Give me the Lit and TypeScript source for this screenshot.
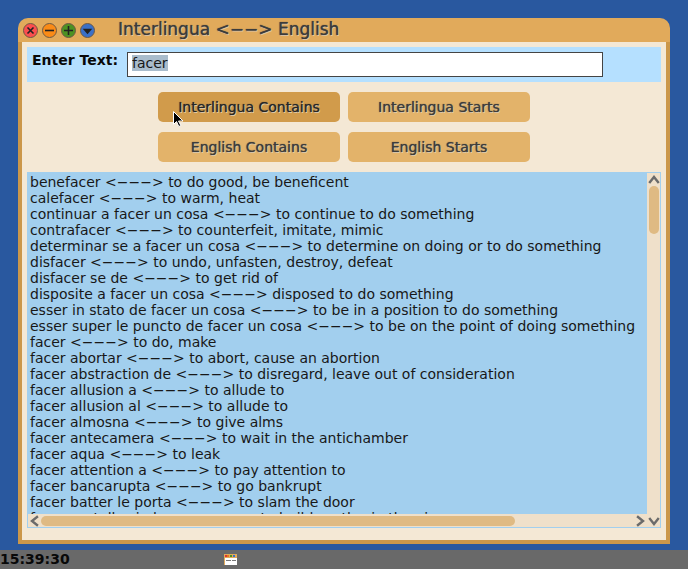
import { LitElement, html, css, svg } from "lit";
import { customElement, state } from "lit/decorators.js";

const ENTRIES: [string, string][] = [
  ["benefacer", "to do good, be beneficent"],
  ["calefacer", "to warm, heat"],
  ["continuar a facer un cosa", "to continue to do something"],
  ["contrafacer", "to counterfeit, imitate, mimic"],
  ["determinar se a facer un cosa", "to determine on doing or to do something"],
  ["disfacer", "to undo, unfasten, destroy, defeat"],
  ["disfacer se de", "to get rid of"],
  ["disposite a facer un cosa", "disposed to do something"],
  ["esser in stato de facer un cosa", "to be in a position to do something"],
  ["esser super le puncto de facer un cosa", "to be on the point of doing something"],
  ["facer", "to do, make"],
  ["facer abortar", "to abort, cause an abortion"],
  ["facer abstraction de", "to disregard, leave out of consideration"],
  ["facer allusion a", "to allude to"],
  ["facer allusion al", "to allude to"],
  ["facer almosna", "to give alms"],
  ["facer antecamera", "to wait in the antichamber"],
  ["facer aqua", "to leak"],
  ["facer attention a", "to pay attention to"],
  ["facer bancarupta", "to go bankrupt"],
  ["facer batter le porta", "to slam the door"],
  ["facer castellos in le aer", "to build castles in the air"],
];

const MODES = ["Interlingua Contains", "Interlingua Starts", "English Contains", "English Starts"];

const CONTROLS = [
  { label: "Close", fill: "#fb4e4e", glyph: svg`<path d="M4.500 4.500l6 6M10.500 4.500l-6 6" />` },
  { label: "Minimize", fill: "#fb8b16", glyph: svg`<path d="M3 7.5h9" />` },
  { label: "Maximize", fill: "#4d9222", glyph: svg`<path d="M3 7.5h9M7.5 3v9" />` },
  { label: "Menu", fill: "#3a70c8", glyph: svg`<path d="M4.500 6.500h6l-3 3.500z" fill="#222" />` },
];

@customElement("app-root")
export class AppRoot extends LitElement {
  @state() private mode = MODES[0];

  static styles = css`
    :host {
      display: flex;
      flex-direction: column;
      box-sizing: border-box;
      min-height: 100vh;
      background: #29589f;
      color: #181818;
      font: 14px/16px "DejaVu Sans", sans-serif;
      position: relative;
    }
    .window {
      flex: 1;
      display: flex;
      flex-direction: column;
      margin: 18px 18px 6px;
      background: #e1aa5b;
      border-radius: 10px 10px 0 0;
    }
    .titlebar {
      display: flex;
      align-items: center;
      gap: 4px;
      height: 24px;
      padding-left: 5px;
    }
    .control {
      width: 15px;
      height: 15px;
      padding: 0;
      border: 0;
      background: none;
    }
    .control svg { display: block; }
    h1 {
      margin: 0 0 2px 19px;
      font-size: 17px;
      line-height: 22px;
      font-weight: 400;
      color: #3c3c3c;
      text-shadow: 0 0 1px #3c3c3c, 1px 1px #e8cfae;
    }
    .body {
      flex: 1;
      display: flex;
      flex-direction: column;
      border: 4px solid #cb974a;
      border-top: 0;
      background: #f4e8d5;
      padding: 5px 5px 12px;
    }
    .query {
      display: flex;
      align-items: flex-start;
      gap: 9px;
      background: #b5e0ff;
      padding: 5px 58px 5px 5px;
    }
    label {
      font-weight: 700;
      color: #080808;
    }
    input {
      flex: 1;
      min-width: 0;
      height: 25px;
      box-sizing: border-box;
      border: 1px solid #444;
      padding: 0 4px 4px;
      font: inherit;
      color: #181818;
      background: #fff;
      outline: none;
    }
    input::selection { background: #a9bccc; color: #181818; }
    .modes {
      display: grid;
      grid-template-columns: 182px 182px;
      justify-content: center;
      gap: 10px 8px;
      padding: 10px 0;
    }
    .mode {
      height: 30px;
      padding: 0;
      border: 0;
      border-radius: 5px;
      background: #e3b36a;
      font: inherit;
      color: #3c3c3c;
      text-shadow: 0 0 1px #3c3c3c, 1px 1px #e8d4b4;
    }
    .mode.active { background: #d19b4b; color: #262626; }
    .results {
      flex: 1;
      display: grid;
      grid-template: minmax(0, 1fr) 13px / minmax(0, 1fr) 13px;
      border: 1px solid #a2cfee;
      background: #efe0ca;
    }
    .list {
      margin: 0;
      padding: 1px 2px 0;
      list-style: none;
      background: #a2cfee;
      overflow: hidden;
      white-space: nowrap;
      height: 0;
      min-height: calc(100% - 1px);
    }
    .bar { display: flex; align-items: center; }
    .bar svg { flex: none; display: block; }
    .vertical { flex-direction: column; }
    .track { flex: 1; display: flex; }
    .vertical .track { flex-direction: column; }
    .thumb { background: #dfba83; border-radius: 5px; }
    .vertical .thumb { width: 10px; height: 48px; }
    .horizontal .thumb { height: 10px; width: 80%; }
    .taskbar {
      display: flex;
      align-items: center;
      height: 19px;
      background: #696969;
      color: #080808;
      font-weight: 700;
      line-height: 19px;
    }
    time { width: 224px; }
    .pointer { position: absolute; left: 173px; top: 111px; pointer-events: none; }
  `;

  firstUpdated() {
    const field = this.renderRoot.querySelector("input")!;
    field.focus();
    field.select();
  }

  private chevron(d: string) {
    return html`<svg width="13" height="13" fill="none" stroke="#6b6b6b" stroke-width="2.4" stroke-linecap="square">
      <path d=${d} />
    </svg>`;
  }

  render() {
    return html`
      <main class="window">
        <header class="titlebar">
          ${CONTROLS.map(
            (c) => html`<button class="control" aria-label=${c.label}>
              <svg width="15" height="15" fill="none" stroke="#222" stroke-width="1.6">
                <circle cx="7.5" cy="7.5" r="7" fill=${c.fill} stroke="#6e5a45" stroke-width="1" />
                ${c.glyph}
              </svg>
            </button>`
          )}
          <h1>Interlingua &lt;−−&gt; English</h1>
        </header>
        <section class="body">
          <div class="query">
            <label for="term">Enter Text:</label>
            <input id="term" type="text" value="facer" />
          </div>
          <div class="modes">
            ${MODES.map(
              (m) => html`<button class="mode ${m === this.mode ? "active" : ""}" @click=${() => (this.mode = m)}>${m}</button>`
            )}
          </div>
          <div class="results">
            <ul class="list">
              ${ENTRIES.map(([term, meaning]) => html`<li>${term} &lt;−−−&gt; ${meaning}</li>`)}
            </ul>
            <div class="bar vertical">
              ${this.chevron("M3 9l4-5 4 5")}
              <div class="track"><div class="thumb"></div></div>
            </div>
            <div class="bar horizontal">
              ${this.chevron("M9 3l-5 4 5 4")}
              <div class="track"><div class="thumb"></div></div>
              ${this.chevron("M4 3l5 4-5 4")}
            </div>
            ${this.chevron("M3 5l4 5 4-5")}
          </div>
        </section>
      </main>
      <footer class="taskbar">
        <time>15:39:30</time>
        <svg width="13" height="11">
          <path fill="#e1aa5b" d="M0 0h13v11H0z" />
          <path fill="#fff" d="M1 4h12v7H1z" />
          <path fill="#d33" d="M1 1h2v2H1z" />
          <path fill="#e87818" d="M3 1h2v2H3z" />
          <path fill="#4d9222" d="M6 1h2v2H6z" />
          <path fill="#3a70c8" d="M9 1h2v2H9z" />
          <path fill="#777" d="M2 6h5v1H2zM8 6h4v1H8z" />
        </svg>
      </footer>
      <svg class="pointer" width="12" height="17" viewBox="0 0 12 17">
        <path d="M.5.5v13l3-3 2.300 5 2-1-2.300-4.500h4.500z" fill="#000" stroke="#fff" />
      </svg>
    `;
  }
}
